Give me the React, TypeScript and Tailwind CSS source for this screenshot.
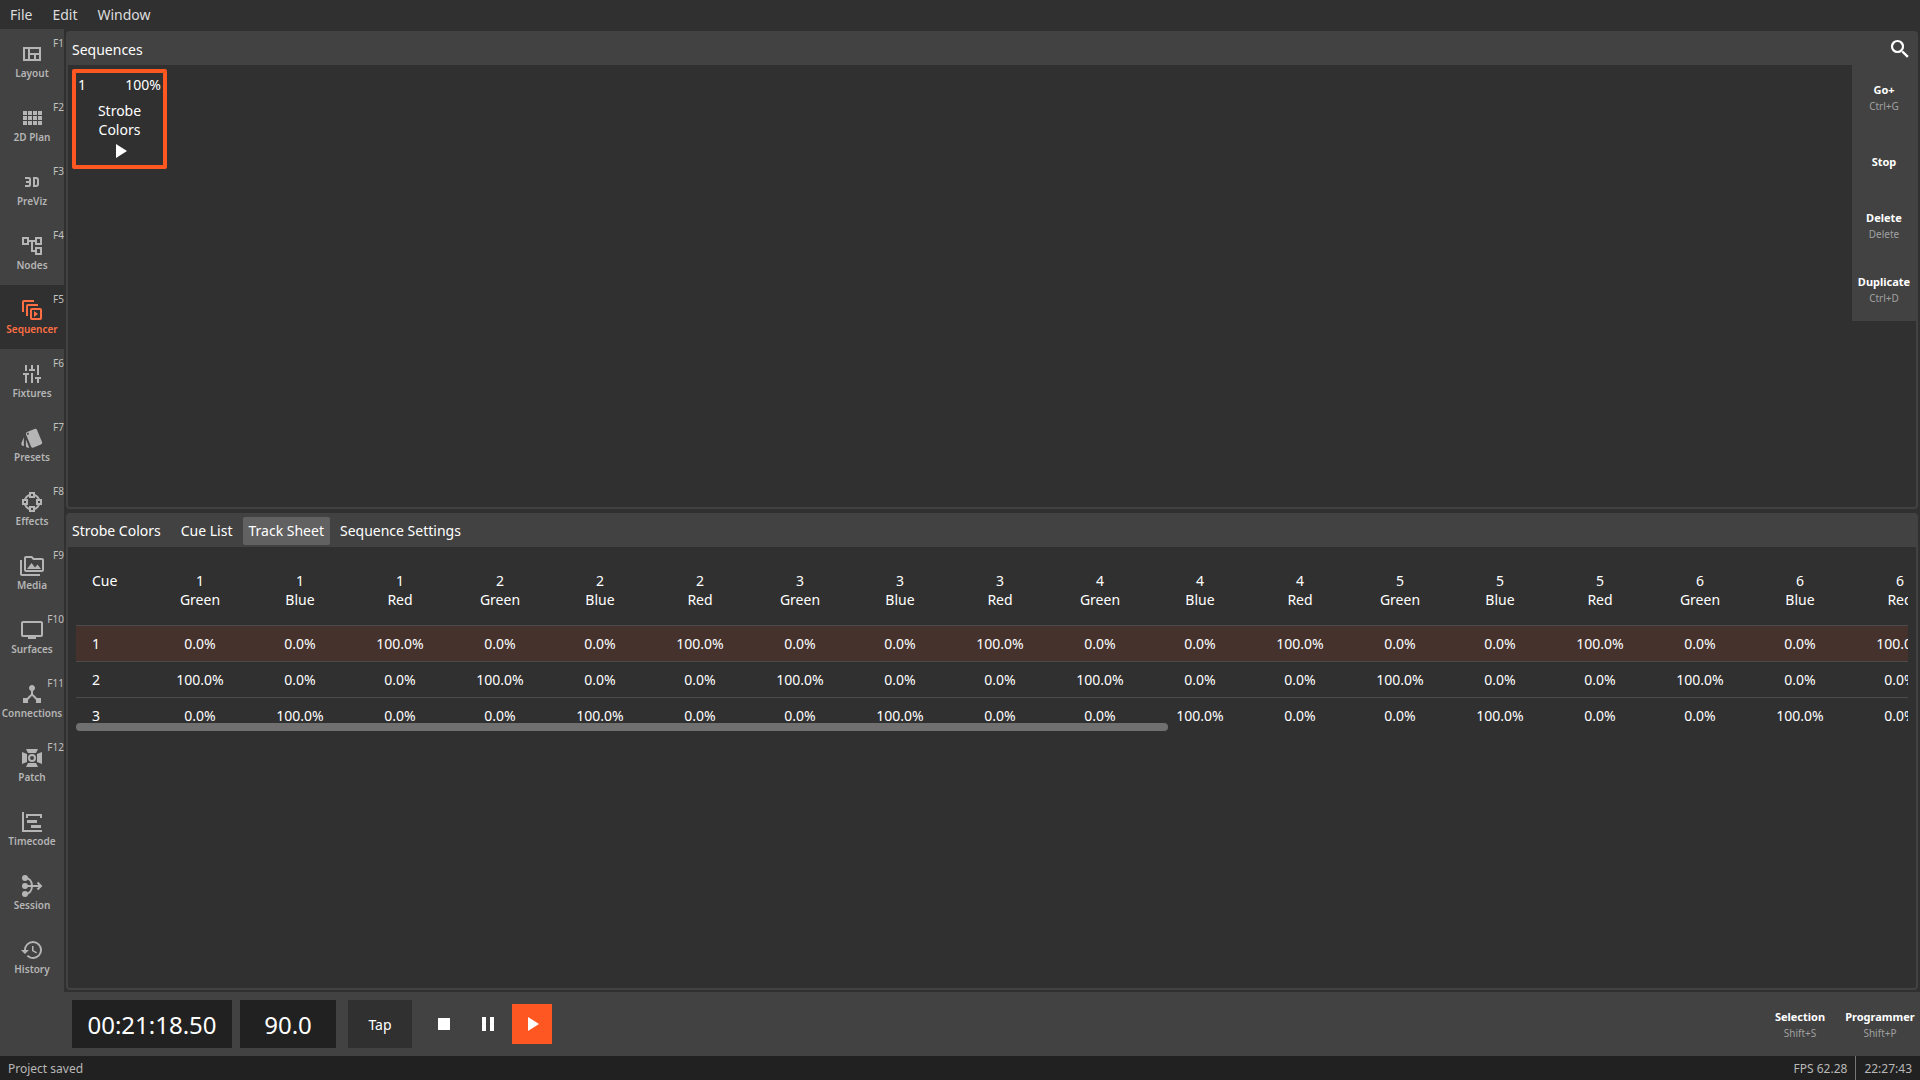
import React from "react";
import { MdStyle, MdOutlinePermMedia, MdTv, MdDeviceHub, MdHistory, MdOutlineAccountTree } from "react-icons/md";

function Glyph({ d, children }: { d?: string; children?: React.ReactNode }) {
  return (
    <svg viewBox="0 0 24 24" className="size-6" fill="currentColor" aria-hidden="true">
      {d ? <path d={d} /> : children}
    </svg>
  );
}

const PLAY = "M8 5v14l11-7L8 5z";

const views = [
  { label: "Layout", hotkey: "F1", icon: <Glyph d="M3 5v14h18V5H3zm2 2h3v10H5V7zm5 0h9v4h-9V7zm0 6h4v4h-4v-4zm6 0h3v4h-3v-4z" /> },
  { label: "2D Plan", hotkey: "F2", icon: <Glyph d="M3 9h4V5H3v4m0 5h4v-4H3v4m5 0h4v-4H8v4m5 0h4v-4h-4v4M8 9h4V5H8v4m5-4v4h4V5h-4m5 9h4v-4h-4v4M3 19h4v-4H3v4m5 0h4v-4H8v4m5 0h4v-4h-4v4m5 0h4v-4h-4v4m0-14v4h4V5h-4z" /> },
  { label: "PreViz", hotkey: "F3", icon: <Glyph d="M5 7h4a2 2 0 0 1 2 2v6a2 2 0 0 1-2 2H5v-2h4v-2H6v-2h3V9H5V7m8 0h3a3 3 0 0 1 3 3v4a3 3 0 0 1-3 3h-3V7m2 2v6h1a1 1 0 0 0 1-1v-4a1 1 0 0 0-1-1h-1z" /> },
  { label: "Nodes", hotkey: "F4", icon: <MdOutlineAccountTree className="size-6" /> },
  { label: "Sequencer", hotkey: "F5", icon: <Glyph d="M4 2a2 2 0 0 0-2 2v10h2V4h10V2H4m4 4a2 2 0 0 0-2 2v10h2V8h10V6H8m4 4a2 2 0 0 0-2 2v8a2 2 0 0 0 2 2h8a2 2 0 0 0 2-2v-8a2 2 0 0 0-2-2h-8m0 2h8v8h-8v-8m2 1v6l4-3-4-3z" /> },
  { label: "Fixtures", hotkey: "F6", icon: <Glyph d="M5 3h2v6H5V3m-2 8h6v2H7v8H5v-8H3v-2m8-8h2v4h2v2H9V7h2V3m0 8h2v10h-2V11m6-8h2v10h-2V3m-2 12h6v2h-2v4h-2v-4h-2v-2z" /> },
  { label: "Presets", hotkey: "F7", icon: <MdStyle className="size-6" /> },
  { label: "Effects", hotkey: "F8", icon: <Glyph d="M9 2v2.06A8.5 8.5 0 0 0 4.05 9H2v6h2.06A8.5 8.5 0 0 0 9 19.95V22h6v-2.06A8.5 8.5 0 0 0 19.95 15H22V9h-2.06A8.5 8.5 0 0 0 15 4.05V2H9m2 2h2v2h-2V4M9 6.25V8h6V6.25A6.4 6.4 0 0 1 17.75 9H16v6h1.75A6.4 6.4 0 0 1 15 17.75V16H9v1.75A6.4 6.4 0 0 1 6.25 15H8V9H6.25A6.4 6.4 0 0 1 9 6.25M4 11h2v2H4v-2m14 0h2v2h-2v-2m-7 7h2v2h-2v-2z" /> },
  { label: "Media", hotkey: "F9", icon: <MdOutlinePermMedia className="size-6" /> },
  { label: "Surfaces", hotkey: "F10", icon: <MdTv className="size-6" /> },
  { label: "Connections", hotkey: "F11", icon: <MdDeviceHub className="size-6" /> },
  {
    label: "Patch",
    hotkey: "F12",
    icon: (
      <Glyph>
        <path d="M6 3h12l-2 4H8L6 3m0 18h12l-2-4H8l-2 4M2 6l5 2v8l-5 2V6m20 0-5 2v8l5 2V6z" />
        <circle cx="12" cy="12" r="3" fill="none" stroke="currentColor" strokeWidth="2" />
      </Glyph>
    ),
  },
  { label: "Timecode", hotkey: "", icon: <Glyph d="M2 2h2v18h18v2H2V2m5 8h10v3H7v-3m4 5h10v3H11v-3M6 4h16v4h-2V6H8v2H6V4z" /> },
  {
    label: "Session",
    hotkey: "",
    icon: (
      <Glyph>
        <circle cx="5" cy="4" r="3" />
        <circle cx="5" cy="12" r="3" />
        <circle cx="5" cy="20" r="3" />
        <path d="M5 4c5 0 7 4 7 8s-2 8-7 8M5 12h16M17.500 8.500l3.500 3.500-3.500 3.500" fill="none" stroke="currentColor" strokeWidth="2" />
      </Glyph>
    ),
  },
  { label: "History", hotkey: "", icon: <MdHistory className="size-6" /> },
];

const actions = [
  { label: "Go+", hotkey: "Ctrl+G" },
  { label: "Stop", hotkey: "" },
  { label: "Delete", hotkey: "Delete" },
  { label: "Duplicate", hotkey: "Ctrl+D" },
];

const channels = ["Green", "Blue", "Red"];
const columns = Array.from({ length: 30 }, (_, i) => ({ fixture: Math.floor(i / 3) + 1, channel: channels[i % 3] }));
const cues = [
  { id: 1, full: "Red" },
  { id: 2, full: "Green" },
  { id: 3, full: "Blue" },
];

function ActionLabel({ label, hotkey }: { label: string; hotkey: string }) {
  return (
    <>
      <span className="text-[11px] leading-4 font-bold text-white">{label}</span>
      {hotkey && <span className="text-[10px] leading-4 text-[#a0a0a0]">{hotkey}</span>}
    </>
  );
}

function Sidebar() {
  return (
    <nav className="flex w-16 shrink-0 flex-col bg-[#424242]">
      {views.map((v) => {
        const active = v.label === "Sequencer";
        return (
          <button
            key={v.label}
            className={
              active
                ? "relative flex h-16 shrink-0 flex-col items-center bg-[#303030] pt-[13px] text-[#ff6f43]"
                : "relative flex h-16 shrink-0 flex-col items-center pt-[13px] text-[#b5b5b5]"
            }
          >
            {v.icon}
            <span className="text-[10px] leading-[14px] font-semibold">{v.label}</span>
            <span className="absolute top-2 right-0 text-[10px] leading-3 text-[#c0c0c0]">{v.hotkey}</span>
          </button>
        );
      })}
    </nav>
  );
}

function Sequences() {
  return (
    <section className="flex min-h-0 flex-1 flex-col rounded border-2 border-[#424242]">
      <header className="flex h-8 shrink-0 items-center justify-between bg-[#424242] px-1">
        <h2 className="pt-0.5">Sequences</h2>
        <button aria-label="Search">
          <Glyph>
            <circle cx="9.5" cy="9.5" r="5.5" fill="none" stroke="currentColor" strokeWidth="2.2" />
            <path d="M15.500 14h-.8l-1 .7v.8l5.300 5.200 1.700-1.700-5.200-5z" />
          </Glyph>
        </button>
      </header>
      <div className="flex min-h-0 flex-1 justify-between">
        <div className="p-1">
          <button className="flex h-[100px] w-[95px] flex-col rounded-xs border-4 border-[#ff5722] px-0.5 pt-0.5 leading-[19px]">
            <span className="flex w-full justify-between">
              <span>1</span>
              <span>100%</span>
            </span>
            <span className="mt-[7px] w-full px-4 text-center">Strobe Colors</span>
            <span className="self-center">
              <Glyph d={PLAY} />
            </span>
          </button>
        </div>
        <div className="flex w-16 flex-col">
          {actions.map((a) => (
            <button key={a.label} className="flex h-16 flex-col items-center justify-center bg-[#424242] pt-0.5">
              <ActionLabel {...a} />
            </button>
          ))}
        </div>
      </div>
    </section>
  );
}

function TrackSheet() {
  return (
    <section className="flex min-h-0 flex-1 flex-col rounded border-2 border-[#424242]">
      <header className="flex h-8 shrink-0 items-center gap-1 bg-[#424242] pl-1">
        <h2 className="mr-2.5">Strobe Colors</h2>
        <button className="h-7 rounded-xs px-1.5">Cue List</button>
        <button className="h-7 rounded-xs bg-[#616161] px-1.5">Track Sheet</button>
        <button className="h-7 rounded-xs px-1.5">Sequence Settings</button>
      </header>
      <div className="p-2">
        <div className="relative">
          <div className="overflow-x-auto overflow-y-hidden [scrollbar-width:none]">
            <table className="w-[3074px] table-fixed border-collapse leading-[19px]">
              <thead>
                <tr className="h-[71px] align-top">
                  <th className="w-[74px] px-4 pt-4 text-left font-normal">Cue</th>
                  {columns.map((c, i) => (
                    <th key={i} className="pt-4 text-center font-normal">
                      {c.fixture}
                      <br />
                      {c.channel}
                    </th>
                  ))}
                </tr>
              </thead>
              <tbody>
                {cues.map((cue) => (
                  <tr
                    key={cue.id}
                    className={cue.id === 1 ? "h-9 border-t border-[#4b4b4b] bg-[#45322c]" : "h-9 border-t border-[#4b4b4b]"}
                  >
                    <td className="px-4">{cue.id}</td>
                    {columns.map((c, i) => (
                      <td key={i} className="text-center">
                        {c.channel === cue.full ? "100.0%" : "0.0%"}
                      </td>
                    ))}
                  </tr>
                ))}
              </tbody>
            </table>
          </div>
          <div className="absolute bottom-[3px] left-0 h-2 w-[59.6%] rounded-full bg-[#707070]" />
        </div>
      </div>
    </section>
  );
}

function Transport() {
  return (
    <div className="flex h-16 shrink-0 items-center bg-[#424242] pl-2">
      <div className="flex h-12 w-40 items-center justify-center bg-[#212121] pt-0.5 text-2xl">00:21:18.50</div>
      <input
        aria-label="Beats per minute"
        defaultValue="90.0"
        className="ml-2 h-12 w-24 bg-[#212121] text-center text-2xl outline-none"
      />
      <button className="ml-3 h-12 w-16 bg-[#303030] pt-0.5">Tap</button>
      <div className="ml-3 flex gap-1">
        <button aria-label="Stop" className="flex size-10 items-center justify-center">
          <Glyph d="M6 6h12v12H6V6z" />
        </button>
        <button aria-label="Pause" className="flex size-10 items-center justify-center">
          <Glyph d="M6 5h4v14H6V5m8 0h4v14h-4V5z" />
        </button>
        <button aria-label="Play" className="flex size-10 items-center justify-center bg-[#ff5722]">
          <Glyph d={PLAY} />
        </button>
      </div>
      <div className="ml-auto flex">
        <button className="flex h-16 w-20 flex-col items-center justify-center pt-0.5">
          <ActionLabel label="Selection" hotkey="Shift+S" />
        </button>
        <button className="flex h-16 w-20 flex-col items-center justify-center pt-0.5">
          <ActionLabel label="Programmer" hotkey="Shift+P" />
        </button>
      </div>
    </div>
  );
}

export default function App() {
  return (
    <div className="flex h-screen flex-col overflow-hidden bg-[#303030] font-['Noto_Sans',sans-serif] text-sm font-normal text-white">
      <div className="flex h-[29px] shrink-0 items-center text-[#dddddd]">
        <button className="px-2.5">File</button>
        <button className="px-2.5">Edit</button>
        <button className="px-2.5">Window</button>
      </div>
      <div className="flex min-h-0 flex-1">
        <Sidebar />
        <div className="flex min-w-0 flex-1 flex-col">
          <main className="flex min-h-0 flex-1 flex-col gap-1 p-0.5">
            <Sequences />
            <TrackSheet />
          </main>
          <Transport />
        </div>
      </div>
      <footer className="flex h-6 shrink-0 items-stretch bg-[#212121] text-xs leading-[26px] text-[#b8b8b8]">
        <span className="pl-2">Project saved</span>
        <span className="ml-auto pr-2">FPS 62.28</span>
        <span className="border-l border-[#757575] px-2">22:27:43</span>
      </footer>
    </div>
  );
}
